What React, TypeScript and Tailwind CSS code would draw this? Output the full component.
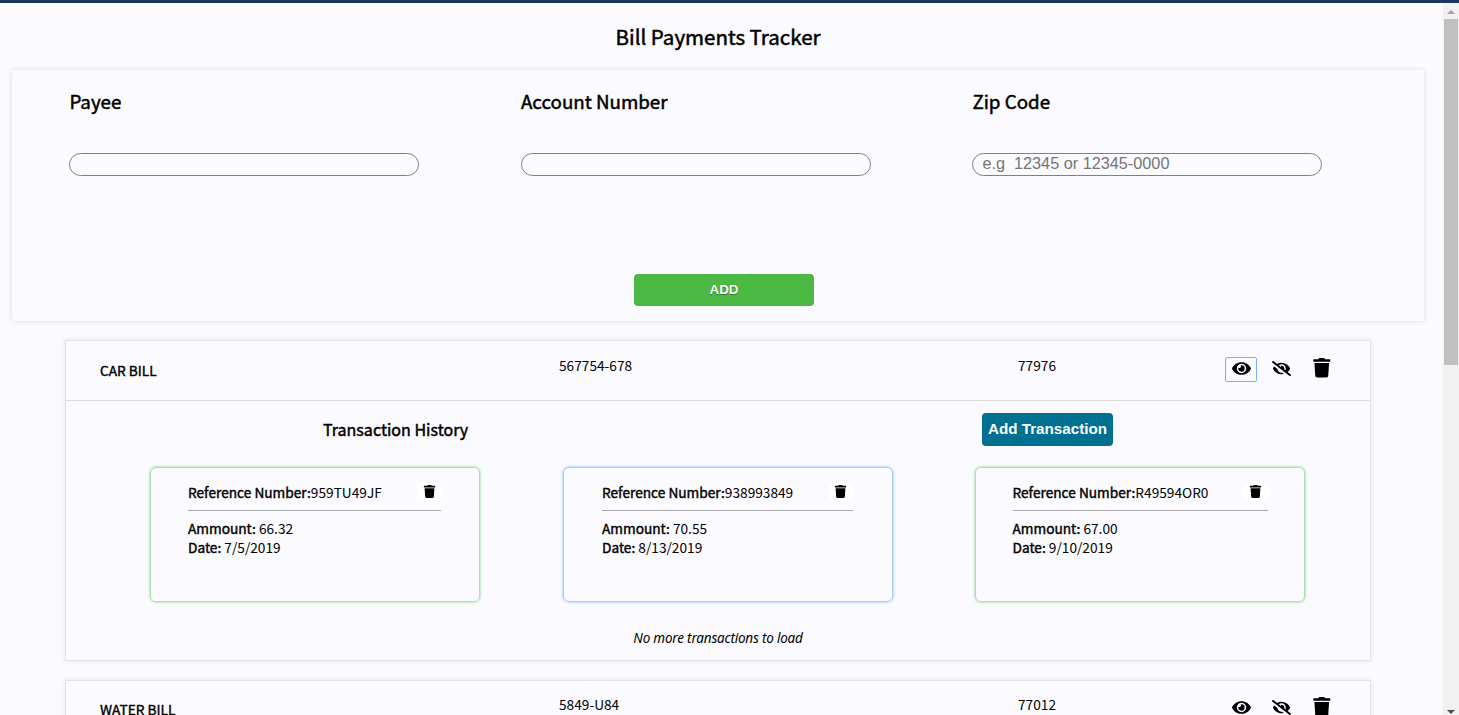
import { FaEye, FaEyeSlash, FaTrash } from "react-icons/fa";

const sans = "font-['Noto_Sans_CJK_SC','Noto_Sans',sans-serif]";
const strong = "font-normal [-webkit-text-stroke:0.4px_black]";

function Field({ label, placeholder }: { label: string; placeholder?: string }) {
  return (
    <label className="flex w-[451.5px] flex-col">
      <span className="text-[18.75px] leading-7 font-normal whitespace-nowrap [-webkit-text-stroke:0.5px_black]">{label}</span>
      <input
        placeholder={placeholder}
        className="mt-[38px] h-[23px] w-[350px] rounded-full border border-[#808080] px-[9px] pb-[2px] font-['Liberation_Sans',sans-serif] text-[16.25px] placeholder:text-[#757575]"
      />
    </label>
  );
}

function BillHeader({ name, account, zip, focused }: { name: string; account: string; zip: string; focused?: boolean }) {
  return (
    <div className="flex h-[59px]">
      <div className={"w-[459px] pt-[19px] text-[13.7px] leading-5 " + strong}>{name}</div>
      <div className="w-[459px] pt-[14px] text-[13.7px] leading-5">{account}</div>
      <div className="w-[207px] pt-[14px] text-[13.7px] leading-5">{zip}</div>
      <div className="flex items-start pt-[16px]">
        <div className={"flex h-[25px] w-[32px] items-center justify-center rounded-[2px] border pb-[3px] " + (focused ? "border-[#7aaefc]" : "border-transparent")}>
          <FaEye size={19} />
        </div>
        <FaEyeSlash size={19} className="mt-[1.5px] ml-[14.5px]" />
        <FaTrash size={19.5} className="mt-px ml-[21px]" />
      </div>
    </div>
  );
}

function Transaction({ reference, amount, date, blue, box }: { reference: string; amount: string; date: string; blue?: boolean; box: string }) {
  return (
    <div className={"h-[135px] w-[330px] rounded-[6px] border pt-[15px] text-[13.7px] leading-[19px] " + (blue ? "border-[#a5cdff] shadow-[0_0_3px_#7ab8ff]" : "border-[#afe0ad] shadow-[0_0_3px_#7fd07c]")}>
      <div className={"flex h-[28px] items-start justify-between border-b border-[#aaa] " + box}>
        <span className="whitespace-nowrap"><b className={strong}>Reference Number:</b>{reference}</span>
        <span className="flex h-[18px] w-[24px] justify-center bg-white pt-[2px]"><FaTrash size={13} /></span>
      </div>
      <div className={box}>
        <div className="mt-[8px]"><b className={strong}>Ammount:</b> {amount}</div>
        <div><b className={strong}>Date:</b> {date}</div>
      </div>
    </div>
  );
}

export default function App() {
  return (
    <div className={"flex h-[715px] w-full flex-col overflow-hidden bg-[#fbfbff] text-black " + sans}>
      <div className="h-[3px] shrink-0 bg-[#1c355e]" />
      <div className="flex min-h-0 flex-1">
        <main className="flex w-[1443px] flex-col overflow-hidden">
          <h1 className="ml-[-7px] pt-[17px] text-center text-[20.5px] leading-8 font-normal [-webkit-text-stroke:0.5px_black]">Bill Payments Tracker</h1>
          <section className="mt-[18px] ml-[12px] flex h-[251px] w-[1412px] shrink-0 flex-col pt-[17px] shadow-[0_0_5px_#00000020]">
            <div className="flex pl-[57.4px]">
              <Field label="Payee" />
              <Field label="Account Number" />
              <Field label="Zip Code" placeholder="e.g  12345 or 12345-0000" />
            </div>
            <button className="mt-[98px] ml-[622px] h-[32px] w-[180px] shrink-0 rounded-[4px] bg-[#4cb944] pb-px font-['Liberation_Sans',sans-serif] text-[13.3px] font-bold text-white [text-shadow:0_1px_1px_#00000060]">ADD</button>
          </section>
          <section className="mt-[19px] ml-[65px] h-[321px] w-[1306px] shrink-0 border border-[#e2e2e8] shadow-[0_0_5px_#00000018]">
            <div className="border-b border-[#dddde2] pl-[34px]"><BillHeader name="CAR BILL" account="567754-678" zip="77976" focused /></div>
            <div className="flex pt-[12px] pl-[257px]">
              <h2 className="w-[659px] pt-[2px] text-[16.05px] leading-7 font-normal [-webkit-text-stroke:0.45px_black]">Transaction History</h2>
              <button className="h-[33px] w-[131px] rounded-[4px] bg-[#007090] font-['Liberation_Sans',sans-serif] text-[15.2px] font-bold whitespace-nowrap text-white">Add Transaction</button>
            </div>
            <div className="mt-[21px] ml-[84px] flex gap-[82.5px]">
              <Transaction reference="959TU49JF" amount="66.32" date="7/5/2019" box="ml-[37px] w-[253px]" />
              <Transaction reference="938993849" amount="70.55" date="8/13/2019" box="ml-[38.5px] w-[250.5px]" blue />
              <Transaction reference="R49594OR0" amount="67.00" date="9/10/2019" box="ml-[36.5px] w-[255.4px]" />
            </div>
            <p className="mt-[26px] text-center font-['Noto_Sans',sans-serif] text-[13.5px] leading-5 tracking-[-0.2px] italic">No more transactions to load</p>
          </section>
          <section className="mt-[19px] ml-[65px] h-[321px] w-[1306px] shrink-0 border border-[#e2e2e8] shadow-[0_0_5px_#00000018]">
            <div className="pl-[34px]"><div className="mt-[-1px]"><BillHeader name="WATER BILL" account="5849-U84" zip="77012" /></div></div>
          </section>
        </main>
        <aside className="flex w-4 flex-col items-center bg-[#f1f1f1] pt-[7px]">
          <svg width="8" height="4"><path d="M0 4L4 0L8 4Z" fill="#a3a3a3" /></svg>
          <div className="mt-[5px] h-[346px] w-[14px] bg-[#c1c1c1]" />
          <svg width="8" height="4" className="mt-auto mb-[1px]"><path d="M0 0L4 4L8 0Z" fill="#505050" /></svg>
        </aside>
      </div>
    </div>
  );
}
